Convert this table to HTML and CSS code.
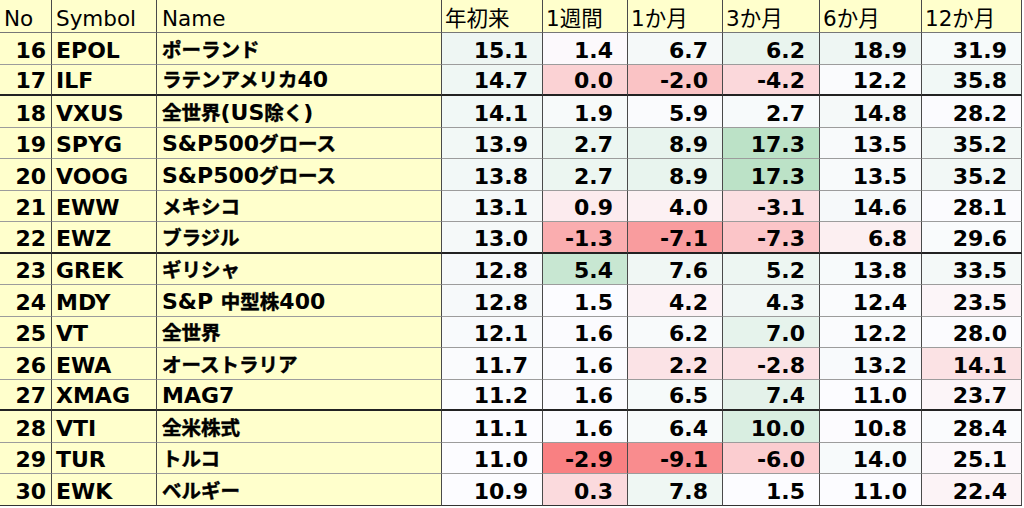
FILE: index.html
```html
<!DOCTYPE html>
<html lang="ja">
<head>
<meta charset="utf-8">
<title>ETF Ranking</title>
<link rel="stylesheet" href="styles.css">
</head>
<body>
<div class="sheet">
  <div class="row head">
    <div class="c no">No</div><div class="c sym">Symbol</div><div class="c name">Name</div>
    <div class="c hn">年初来</div><div class="c hn">1週間</div><div class="c hn">1か月</div>
    <div class="c hn">3か月</div><div class="c hn">6か月</div><div class="c hn">12か月</div>
  </div>
  <div class="row">
    <div class="c no">16</div><div class="c sym">EPOL</div><div class="c name"><span><span class="ja">ポーランド</span></span></div>
    <div class="c num">15.1</div><div class="c num">1.4</div><div class="c num">6.7</div><div class="c num">6.2</div><div class="c num">18.9</div><div class="c num">31.9</div>
  </div>
  <div class="row grp">
    <div class="c no">17</div><div class="c sym">ILF</div><div class="c name"><span><span class="ja">ラテンアメリカ</span>40</span></div>
    <div class="c num">14.7</div><div class="c num">0.0</div><div class="c num">-2.0</div><div class="c num">-4.2</div><div class="c num">12.2</div><div class="c num">35.8</div>
  </div>
  <div class="row">
    <div class="c no">18</div><div class="c sym">VXUS</div><div class="c name"><span><span class="ja">全世界</span>(US<span class="ja">除く</span>)</span></div>
    <div class="c num">14.1</div><div class="c num">1.9</div><div class="c num">5.9</div><div class="c num">2.7</div><div class="c num">14.8</div><div class="c num">28.2</div>
  </div>
  <div class="row">
    <div class="c no">19</div><div class="c sym">SPYG</div><div class="c name"><span>S&amp;P500<span class="ja">グロース</span></span></div>
    <div class="c num">13.9</div><div class="c num">2.7</div><div class="c num">8.9</div><div class="c num">17.3</div><div class="c num">13.5</div><div class="c num">35.2</div>
  </div>
  <div class="row">
    <div class="c no">20</div><div class="c sym">VOOG</div><div class="c name"><span>S&amp;P500<span class="ja">グロース</span></span></div>
    <div class="c num">13.8</div><div class="c num">2.7</div><div class="c num">8.9</div><div class="c num">17.3</div><div class="c num">13.5</div><div class="c num">35.2</div>
  </div>
  <div class="row">
    <div class="c no">21</div><div class="c sym">EWW</div><div class="c name"><span><span class="ja">メキシコ</span></span></div>
    <div class="c num">13.1</div><div class="c num">0.9</div><div class="c num">4.0</div><div class="c num">-3.1</div><div class="c num">14.6</div><div class="c num">28.1</div>
  </div>
  <div class="row grp">
    <div class="c no">22</div><div class="c sym">EWZ</div><div class="c name"><span><span class="ja">ブラジル</span></span></div>
    <div class="c num">13.0</div><div class="c num">-1.3</div><div class="c num">-7.1</div><div class="c num">-7.3</div><div class="c num">6.8</div><div class="c num">29.6</div>
  </div>
  <div class="row">
    <div class="c no">23</div><div class="c sym">GREK</div><div class="c name"><span><span class="ja">ギリシャ</span></span></div>
    <div class="c num">12.8</div><div class="c num">5.4</div><div class="c num">7.6</div><div class="c num">5.2</div><div class="c num">13.8</div><div class="c num">33.5</div>
  </div>
  <div class="row">
    <div class="c no">24</div><div class="c sym">MDY</div><div class="c name"><span>S&amp;P <span class="ja">中型株</span>400</span></div>
    <div class="c num">12.8</div><div class="c num">1.5</div><div class="c num">4.2</div><div class="c num">4.3</div><div class="c num">12.4</div><div class="c num">23.5</div>
  </div>
  <div class="row">
    <div class="c no">25</div><div class="c sym">VT</div><div class="c name"><span><span class="ja">全世界</span></span></div>
    <div class="c num">12.1</div><div class="c num">1.6</div><div class="c num">6.2</div><div class="c num">7.0</div><div class="c num">12.2</div><div class="c num">28.0</div>
  </div>
  <div class="row">
    <div class="c no">26</div><div class="c sym">EWA</div><div class="c name"><span><span class="ja">オーストラリア</span></span></div>
    <div class="c num">11.7</div><div class="c num">1.6</div><div class="c num">2.2</div><div class="c num">-2.8</div><div class="c num">13.2</div><div class="c num">14.1</div>
  </div>
  <div class="row grp">
    <div class="c no">27</div><div class="c sym">XMAG</div><div class="c name"><span>MAG7</span></div>
    <div class="c num">11.2</div><div class="c num">1.6</div><div class="c num">6.5</div><div class="c num">7.4</div><div class="c num">11.0</div><div class="c num">23.7</div>
  </div>
  <div class="row">
    <div class="c no">28</div><div class="c sym">VTI</div><div class="c name"><span><span class="ja">全米株式</span></span></div>
    <div class="c num">11.1</div><div class="c num">1.6</div><div class="c num">6.4</div><div class="c num">10.0</div><div class="c num">10.8</div><div class="c num">28.4</div>
  </div>
  <div class="row">
    <div class="c no">29</div><div class="c sym">TUR</div><div class="c name"><span><span class="ja">トルコ</span></span></div>
    <div class="c num">11.0</div><div class="c num">-2.9</div><div class="c num">-9.1</div><div class="c num">-6.0</div><div class="c num">14.0</div><div class="c num">25.1</div>
  </div>
  <div class="row last">
    <div class="c no">30</div><div class="c sym">EWK</div><div class="c name"><span><span class="ja">ベルギー</span></span></div>
    <div class="c num">10.9</div><div class="c num">0.3</div><div class="c num">7.8</div><div class="c num">1.5</div><div class="c num">11.0</div><div class="c num">22.4</div>
  </div>
</div>
<script src="script.js"></script>
</body>
</html>
```

FILE: styles.css
```css
html, body {
  margin: 0;
  padding: 0;
  background: #ffffff;
}

body {
  font-family: "DejaVu Sans", "Noto Sans CJK JP", sans-serif;
  font-size: 22px;
  color: #000;
}

.sheet {
  display: flex;
  flex-direction: column;
  width: 1022px;
}

.row {
  display: grid;
  grid-template-columns: 52px 105px 285px 101px 85px 95px 97px 102px 100px;
  height: 31.53px;
}

.row.head {
  height: 33px;
}

.c {
  box-sizing: border-box;
  display: flex;
  align-items: flex-end;
  padding-bottom: 1px;
  line-height: 24px;
  white-space: nowrap;
  overflow: hidden;
  border-right: 1px solid #4a4a4a;
  border-bottom: 1px solid #9c9c9c;
  background: #ffffcc;
  font-weight: bold;
}

.row.grp .c {
  border-bottom: 2px solid #222;
}

.row.last .c {
  border-bottom: 1px solid #333;
}

.row.head .c {
  font-weight: normal;
  font-size: 21.5px;
  border-bottom-color: #777;
}

.no {
  justify-content: flex-end;
  padding-right: 5px;
}

.row.head .no {
  justify-content: flex-start;
  padding-left: 4px;
  padding-right: 0;
}

.sym {
  padding-left: 4px;
}

.name {
  padding-left: 5px;
}

.ja {
  font-size: 19.5px;
  -webkit-text-stroke: 0.45px currentColor;
}

.hn {
  padding-left: 3px;
}

.num {
  justify-content: flex-end;
  padding-right: 14px;
  background: #fcfcff;
}
```

FILE: script.js
```js
// Excel-style 3-colour scale (red - white - green) per numeric column
var scales = [
  { min: -20, mid: 11, max: 55 },
  { min: -3.7, mid: 1.5, max: 13 },
  { min: -13.7, mid: 5.5, max: 31.6 },
  { min: -22, mid: 1.5, max: 39 },
  { min: -35, mid: 11, max: 100 },
  { min: -45, mid: 27, max: 150 }
];
var WHITE = [252, 252, 255];
var RED = [248, 105, 107];
var GREEN = [99, 190, 123];

function mix(a, b, t) {
  t = Math.max(0, Math.min(1, t));
  return 'rgb(' + a.map(function (v, i) {
    return Math.round(v + (b[i] - v) * t);
  }).join(',') + ')';
}

document.querySelectorAll('.row:not(.head)').forEach(function (row) {
  row.querySelectorAll('.num').forEach(function (cell, i) {
    var v = parseFloat(cell.textContent);
    var s = scales[i];
    cell.style.backgroundColor = v >= s.mid
      ? mix(WHITE, GREEN, (v - s.mid) / (s.max - s.mid))
      : mix(WHITE, RED, (s.mid - v) / (s.mid - s.min));
  });
});
```
